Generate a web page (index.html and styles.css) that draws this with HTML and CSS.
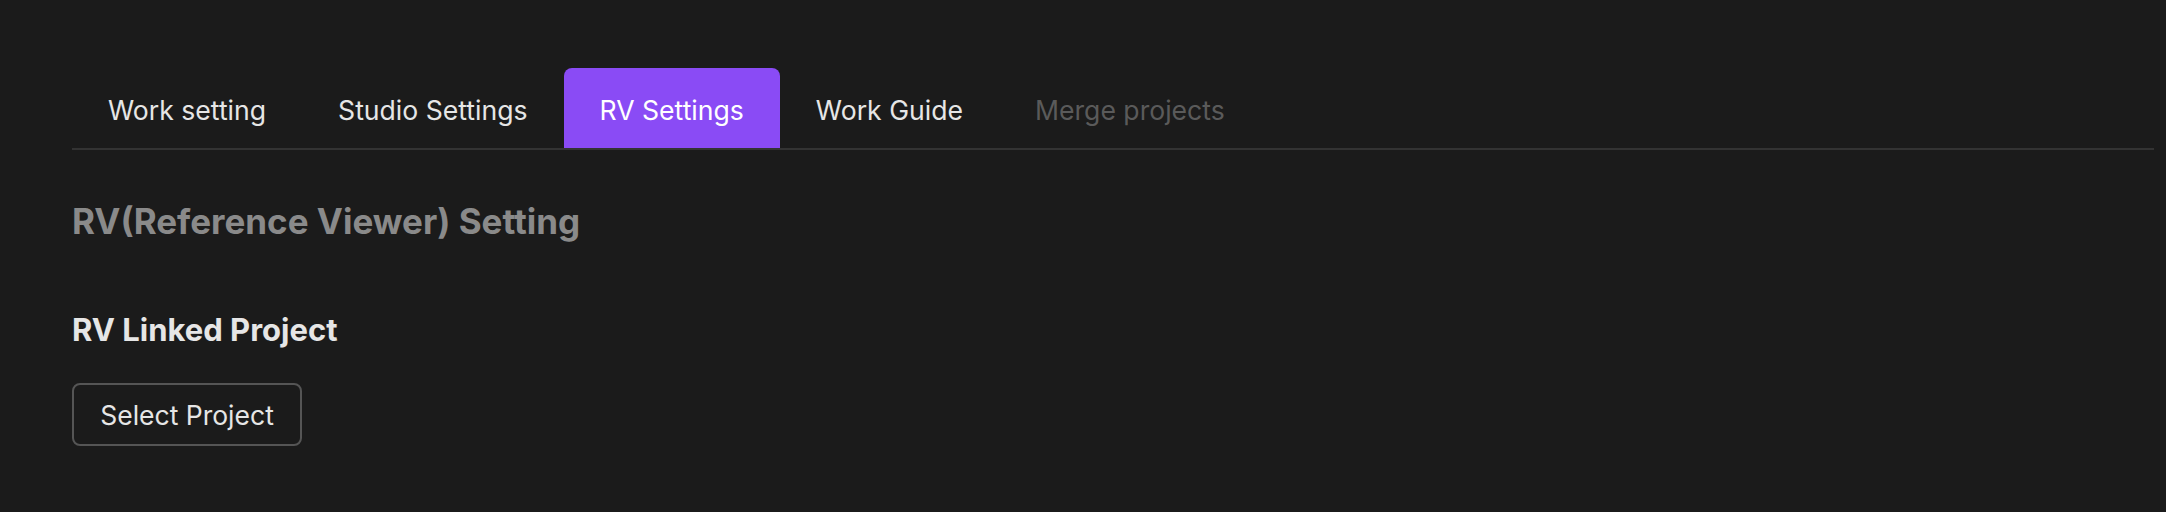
FILE: index.html
```html
<!DOCTYPE html>
<html>
<head>
<meta charset="utf-8">
<link rel="stylesheet" href="styles.css">
</head>
<body>
<div class="page">
  <nav class="tabs">
    <div class="tab">Work setting</div>
    <div class="tab">Studio Settings</div>
    <div class="tab active">RV Settings</div>
    <div class="tab">Work Guide</div>
    <div class="tab disabled">Merge projects</div>
  </nav>
  <h1 class="title">RV(Reference Viewer) Setting</h1>
  <h2 class="section">RV Linked Project</h2>
  <button class="btn">Select Project</button>
</div>
</body>
</html>
```

FILE: styles.css
```css
html, body {
  margin: 0;
  padding: 0;
  background: #1b1b1b;
}
body {
  font-family: Inter, "Noto Sans", sans-serif;
  color: #e8e8e8;
}
.page {
  padding: 68px 12px 0 72px;
  display: flex;
  flex-direction: column;
  align-items: flex-start;
}
.tabs {
  display: flex;
  align-self: stretch;
  border-bottom: 2px solid #333333;
}
.tab {
  height: 80px;
  box-sizing: border-box;
  padding: 3px 36px 0 36px;
  display: flex;
  align-items: center;
  font-size: 26.6px;
  color: #e6e6e6;
  border-radius: 8px 8px 0 0;
}
.tab.active {
  background: #8a4bf5;
  color: #ffffff;
}
.tab.disabled {
  color: #5a5a5a;
}
.title {
  margin: 51px 0 0 0;
  font-size: 35px;
  line-height: 40px;
  font-weight: 700;
  color: #8a8a8a;
}
.section {
  margin: 71px 0 0 0;
  font-size: 31px;
  line-height: 36px;
  font-weight: 700;
  color: #e6e6e6;
}
.btn {
  margin-top: 35px;
  width: 230px;
  height: 63px;
  background: transparent;
  border: 2px solid #555555;
  border-radius: 8px;
  font-family: Inter, "Noto Sans", sans-serif;
  font-size: 26.5px;
  color: #e6e6e6;
  padding: 0;
}
```
